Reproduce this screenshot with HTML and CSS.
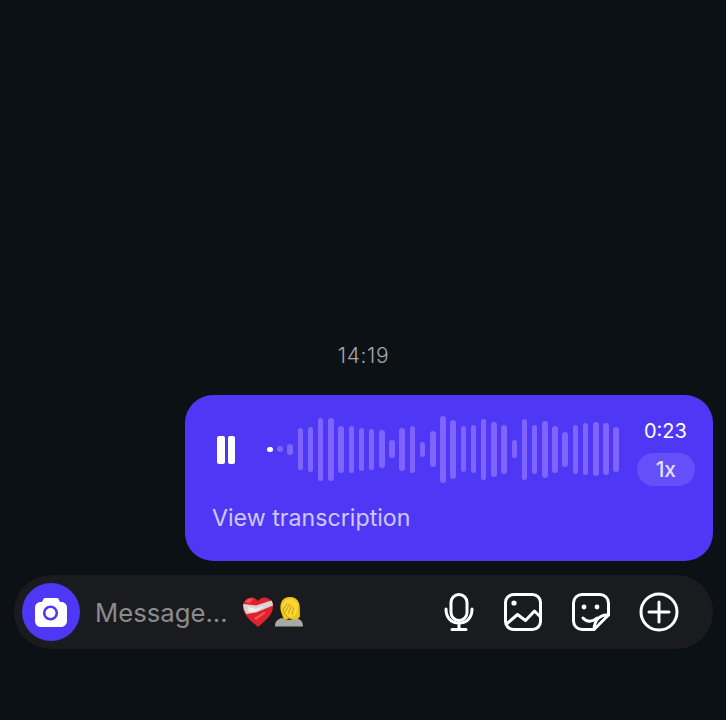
FILE: index.html
```html
<!DOCTYPE html>
<html lang="en">
<head>
  <meta charset="UTF-8">
  <title>Voice message</title>
  <link rel="stylesheet" href="styles.css">
</head>
<body>
  <div class="chat">
    <div class="timestamp">14:19</div>

    <div class="bubble">
      <div class="player">
        <div class="pause"><span></span><span></span></div>
        <div class="wave">
          <i class="played" style="height:5px"></i>
          <i style="height:6px"></i><i style="height:11px"></i><i style="height:42px"></i><i style="height:45px"></i>
          <i style="height:63px"></i><i style="height:63px"></i><i style="height:47px"></i><i style="height:47px"></i>
          <i style="height:43px"></i><i style="height:41px"></i><i style="height:38px"></i><i style="height:18px"></i>
          <i style="height:43px"></i><i style="height:47px"></i><i style="height:15px"></i><i style="height:36px"></i>
          <i style="height:67px"></i><i style="height:59px"></i><i style="height:46px"></i><i style="height:48px"></i>
          <i style="height:61px"></i><i style="height:55px"></i><i style="height:49px"></i><i style="height:18px"></i>
          <i style="height:61px"></i><i style="height:49px"></i><i style="height:57px"></i><i style="height:47px"></i>
          <i style="height:35px"></i><i style="height:49px"></i><i style="height:52px"></i><i style="height:54px"></i>
          <i style="height:52px"></i><i style="height:45px"></i>
        </div>
        <div class="meta">
          <span class="duration">0:23</span>
          <span class="speed">1x</span>
        </div>
      </div>
      <div class="transcription">View transcription</div>
    </div>

    <div class="composer">
      <div class="camera">
        <svg width="32" height="29" viewBox="0 0 32 29">
          <path fill="#fff" d="M10.500 0h11c1 0 1.800.5 2.300 1.400L25 4h1.500C29.500 4 32 6.500 32 9.500V23c0 3.300-2.700 6-6 6H6c-3.300 0-6-2.700-6-6V9.500C0 6.500 2.500 4 5.500 4H7l1.200-2.600C8.700.5 9.500 0 10.500 0z"/>
          <circle cx="15.500" cy="15" r="6.300" fill="none" stroke="#4f38f5" stroke-width="2.600"/>
        </svg>
      </div>
      <span class="placeholder">Message...</span>
      <div class="emojis">
        <svg width="32" height="32" viewBox="0 0 32 32">
          <path fill="#e0222e" d="M16 31C9 25 1 19 1 10.500 1 5 5 1.500 9.500 1.500c3 0 5.200 1.500 6.500 3.800 1.300-2.300 3.500-3.800 6.500-3.800C27 1.500 31 5 31 10.500 31 19 23 25 16 31z"/>
          <path fill="#f0555f" d="M3 6c2-3 5-4 8-3.500L8 7z"/>
          <path fill="#d9d4d2" d="M1.200 8L14 9.500 29.500 4.500c1 1.500 1.500 3.500 1.500 5L14 16.500 4.500 18C2.500 15 1 12 1.200 8z"/>
          <path fill="#f4efec" d="M6 11l8 2 9-3.500-9 6-7 .5z"/>
          <path fill="#ff8a8f" d="M12 22l10-6 2 1-10 7z" opacity=".5"/>
        </svg>
        <svg width="30" height="32" viewBox="0 0 32 34">
          <path fill="#a8a8a4" d="M1 32.500c0-5.500 3-7.500 7-9l8 2 8-2c4 1.500 7 3.500 7 9z"/>
          <path fill="#f2c413" d="M7 15C6 7 9 1 17 1s11 6 10.500 14c-.2 3 .5 5 0 7-1.500 2-4 3.500-6 3l-5-1-5 1c-2-1-3-6-4.500-10z"/>
          <path fill="#f9d535" d="M9 9c1.500-4 4-6 8-6s7 2 8 6c.5 4-.5 8-2 11-2 2-4 3-6.500 3-3 0-5-3-6.500-6C9 14 8.500 12 9 9z"/>
          <path fill="none" stroke="#c2950c" stroke-width="1" d="M10 14l4-6M12 17l5-9M15 19l4-9M19 20l2-8M10 14c0 3 2 6 6 9"/>
        </svg>
      </div>
      <div class="actions">
        <svg width="32" height="38" viewBox="0 0 32 38" fill="none" stroke="#fff" stroke-width="3" stroke-linecap="round">
          <rect x="8" y="1.500" width="16" height="26" rx="8"/>
          <path d="M3 16c0 8.500 5 14 13 14s13-5.500 13-14M16 30v6M9 36.500h14"/>
        </svg>
        <svg width="38" height="38" viewBox="0 0 38 38" fill="none" stroke="#fff" stroke-width="3" stroke-linejoin="round" stroke-linecap="round">
          <rect x="1.500" y="1.500" width="35" height="35" rx="8"/>
          <circle cx="10" cy="10" r="2.600" fill="#fff" stroke="none"/>
          <path d="M2.500 31l11-9.500 8 6 9-9.500 6 6"/>
        </svg>
        <svg width="38" height="38" viewBox="0 0 38 38" fill="none" stroke="#fff" stroke-width="3" stroke-linejoin="round" stroke-linecap="round">
          <path d="M22 36.500H10A8.500 8.500 0 0 1 1.500 28V10A8.500 8.500 0 0 1 10 1.500h18A8.500 8.500 0 0 1 36.500 10v12z"/>
          <path d="M36.500 22C28 21 22.500 27 22 36.500"/>
          <path d="M11 25c3.500 4 9 4.500 14 0"/>
          <circle cx="12" cy="14" r="2.400" fill="#fff" stroke="none"/>
          <circle cx="25" cy="14" r="2.400" fill="#fff" stroke="none"/>
        </svg>
        <svg width="40" height="40" viewBox="0 0 40 40" fill="none" stroke="#fff" stroke-width="3" stroke-linecap="round">
          <circle cx="20" cy="20" r="18"/>
          <path d="M20 10v20M10 20h20"/>
        </svg>
      </div>
    </div>
  </div>
</body>
</html>
```

FILE: styles.css
```css
* {
  margin: 0;
  padding: 0;
  box-sizing: border-box;
}

body {
  height: 720px;
  background: #0c1115;
  font-family: Inter, "Liberation Sans", sans-serif;
  color: white;
  overflow: hidden;
}

.chat {
  height: 100%;
  display: flex;
  flex-direction: column;
  justify-content: flex-end;
  padding: 0 13px 71px 14px;
}

.timestamp {
  text-align: center;
  font-size: 21px;
  line-height: 24px;
  font-weight: 300;
  letter-spacing: 0.6px;
  color: #a4a7aa;
  margin-bottom: 27px;
}

.bubble {
  align-self: flex-end;
  width: 528px;
  height: 166px;
  background: #4f38f5;
  border-radius: 28px;
  padding: 21px 18px 0 27px;
  margin-bottom: 14px;
}

.player {
  display: flex;
  align-items: center;
  height: 66px;
}

.pause {
  display: flex;
  gap: 3px;
  width: 18px;
  margin-top: 1px;
  margin-left: 5px;
}

.pause span {
  width: 7.500px;
  height: 28px;
  background: #fff;
  border-radius: 2px;
}

.wave {
  display: flex;
  align-items: center;
  gap: 4.700px;
  margin-left: 32px;
}

.wave i {
  width: 5.500px;
  background: #7f64ff;
  border-radius: 3px;
}

.wave i.played {
  background: #fff;
}

.meta {
  display: flex;
  flex-direction: column;
  align-items: center;
  gap: 10px;
  margin-left: 18px;
  width: 58px;
  margin-top: 7px;
}

.duration {
  font-size: 20px;
  line-height: 24px;
  margin-right: 1px;
}

.speed {
  width: 58px;
  height: 33px;
  border-radius: 17px;
  background: #654ff8;
  color: #e3dfff;
  font-size: 21px;
  font-weight: 500;
  line-height: 33px;
  text-align: center;
}

.transcription {
  margin-top: 21px;
  font-size: 23.200px;
  line-height: 30px;
  color: #cfc8ff;
}

.composer {
  display: flex;
  align-items: center;
  height: 74px;
  background: #1a1b1e;
  border-radius: 37px;
  padding: 0 34px 0 8px;
}

.camera {
  width: 58px;
  height: 58px;
  border-radius: 50%;
  background: #4f38f5;
  display: flex;
  align-items: center;
  justify-content: center;
  flex-shrink: 0;
}

.placeholder {
  margin-left: 15px;
  font-size: 25.700px;
  color: #8b8c8e;
  white-space: nowrap;
}

.emojis {
  display: flex;
  align-items: center;
  margin-left: 14px;
  flex-shrink: 0;
}

.actions {
  margin-left: auto;
  display: flex;
  align-items: center;
  gap: 29.500px;
}
```
